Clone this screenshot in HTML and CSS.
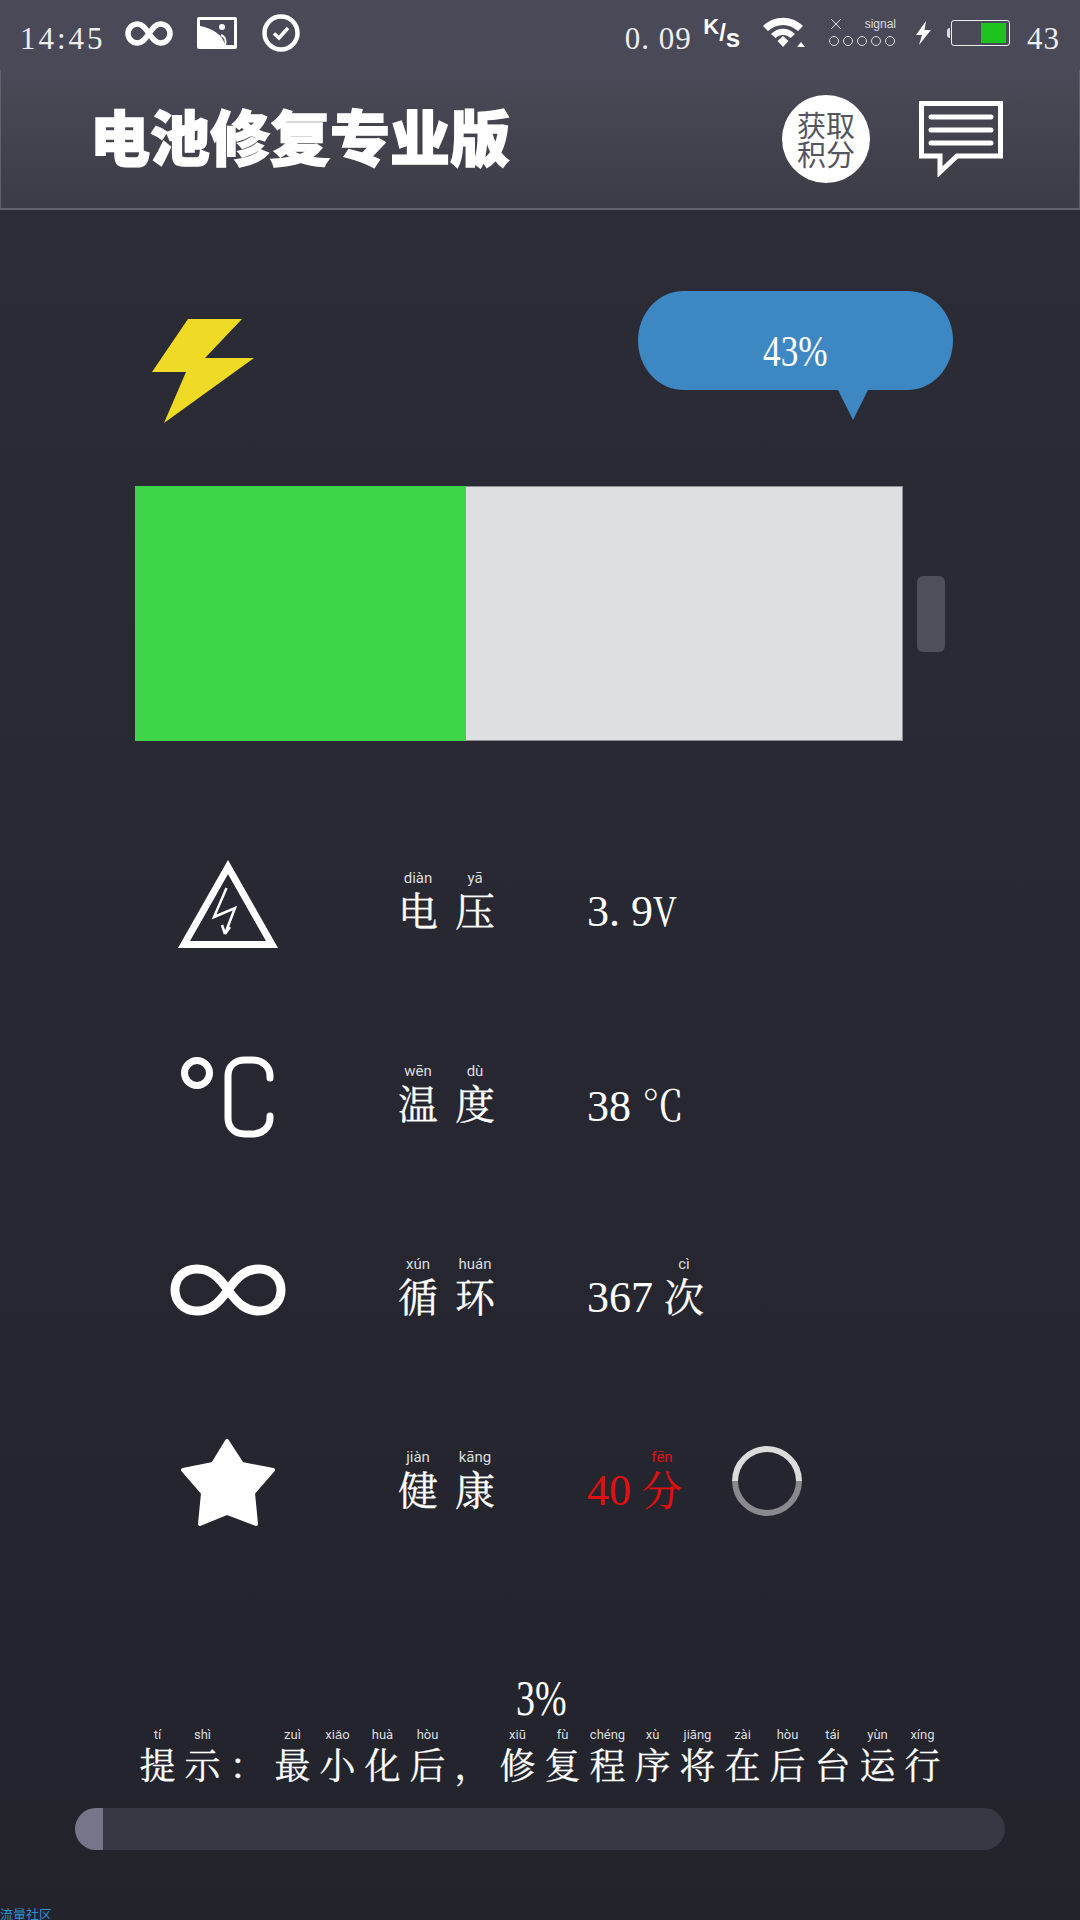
FILE: index.html
```html
<!DOCTYPE html>
<html lang="zh-CN">
<head>
  <meta charset="UTF-8" />
  <title>电池修复专业版</title>
  <meta name="viewport" content="width=device-width, initial-scale=1.0" />
  <link rel="stylesheet" href="styles.css">
</head>
<body>

  <!-- Status bar -->
  <div class="status-bar">
    <span class="status-time">14:45</span>
    <svg class="st-loop" viewBox="0 0 48 25"><path d="M24 12.500C20 6.500 17 3 12.500 3a9.500 9.500 0 0 0 0 19C17 22 20 18.500 24 12.500S31 3 35.500 3a9.500 9.500 0 0 1 0 19C31 22 28 18.500 24 12.500Z" fill="none" stroke="#fff" stroke-width="5.500"/></svg>
    <svg class="st-image" viewBox="0 0 40 32"><rect width="40" height="32" rx="2" fill="#fff"/><path d="M3 3H37V28H28C26 18 15 11 3 9Z" fill="#494957"/><circle cx="25" cy="10" r="3" fill="#fff"/><path d="M24 18C29 20 29 25 28 28" stroke="#fff" stroke-width="2" fill="none"/></svg>
    <svg class="st-check" viewBox="0 0 38 38"><circle cx="19" cy="19" r="16.500" fill="none" stroke="#fff" stroke-width="4.500"/><path d="M12 19.500L17 24L26 14" fill="none" stroke="#fff" stroke-width="3.500"/></svg>

    <span class="status-speed">0. 09</span>
    <span class="status-unit"><span class="unit-k">K</span>/<span class="unit-s">s</span></span>
    <svg class="st-wifi" viewBox="0 0 42 32"><path d="M0 10C11 -1 29 -1 40 10L35 15C26 7 14 7 5 15Z" fill="#fff"/><path d="M8 18C15 11 25 11 32 18L27.500 22C23 18 17 18 12.500 22Z" fill="#fff"/><path d="M14.500 25L20 20L25.500 25L20 31Z" fill="#fff"/><path d="M34 31L38 26L42 31Z" fill="#fff"/></svg>
    <div class="status-signal">
      <div class="signal-top">
        <svg class="st-cross" viewBox="0 0 12 12"><path d="M1 1L11 11M11 1L1 11" stroke="#ddd" stroke-width="1"/></svg>
        <span>signal</span>
      </div>
      <svg class="st-dots" viewBox="0 0 68 12">
        <circle cx="6" cy="6" r="4.500"/><circle cx="20" cy="6" r="4.500"/><circle cx="34" cy="6" r="4.500"/><circle cx="48" cy="6" r="4.500"/><circle cx="62" cy="6" r="4.500"/>
      </svg>
    </div>
    <svg class="st-bolt" viewBox="0 0 15 24"><path d="M10 0L0 14H6L3 24L15 9H8.500Z" fill="#fff"/></svg>
    <div class="st-battery">
      <div class="st-battery-nub"></div>
      <div class="st-battery-body"><div class="st-battery-fill"></div></div>
    </div>
    <span class="status-level">43</span>
  </div>

  <!-- Header -->
  <div class="header">
    <div class="header-title">电池修复专业版</div>
    <div class="points-btn">获取<br>积分</div>
    <svg class="chat-icon" viewBox="0 0 84 76">
      <path d="M2.500 2.500H81.500V55H38L21 71V55H2.500Z" fill="none" stroke="#fff" stroke-width="5"/>
      <path d="M12 16H72M12 29H72M12 42H72" stroke="#fff" stroke-width="5" stroke-linecap="round"/>
    </svg>
  </div>

  <div class="main">
    <div class="top-row">
      <svg class="bolt-icon" viewBox="0 0 102 104"><path d="M36 0H90L53 39H102L12 104L34 53H0Z" fill="#efda25"/></svg>
      <div class="bubble"><span class="narrow">43%</span></div>
    </div>

    <div class="battery-row">
      <div class="battery">
        <div class="battery-fill" style="width: 43.1%"></div>
      </div>
      <div class="battery-nub"></div>
    </div>

    <!-- Stats -->
    <div class="stats">
      <div class="stat">
        <div class="stat-icon">
          <svg width="102" height="90" viewBox="0 0 102 90">
            <path d="M51 8L95 85.500H7Z" fill="none" stroke="#fff" stroke-width="7"/>
            <path d="M49.500 29L37 58L58 49L48 75M48 75L45 66M48 75L53 68" fill="none" stroke="#fff" stroke-width="2.500"/>
          </svg>
        </div>
        <div class="stat-label">
          <span class="py"><rt>diàn</rt><b>电</b></span>
          <span class="py"><rt>yā</rt><b>压</b></span>
        </div>
        <div class="stat-value">3. 9<span class="volt">V</span></div>
      </div>

      <div class="stat">
        <div class="stat-icon">
          <svg width="94" height="84" viewBox="0 0 94 84">
            <circle cx="16" cy="18" r="12.500" fill="none" stroke="#fff" stroke-width="7"/>
            <path d="M89 23V21C89 11 81 5 71 5H64C54 5 47 11 47 21V63C47 73 54 79 64 79H71C81 79 89 73 89 63V61" fill="none" stroke="#fff" stroke-width="7" stroke-linecap="round"/>
          </svg>
        </div>
        <div class="stat-label">
          <span class="py"><rt>wēn</rt><b>温</b></span>
          <span class="py"><rt>dù</rt><b>度</b></span>
        </div>
        <div class="stat-value">38 <span class="cjk">℃</span></div>
      </div>

      <div class="stat">
        <div class="stat-icon">
          <svg width="116" height="52" viewBox="0 0 116 52">
            <path d="M58 26C48 12 40 5 27 5C14 5 5 14 5 26S14 47 27 47C40 47 48 40 58 26S76 5 89 5C102 5 111 14 111 26S102 47 89 47C76 47 68 40 58 26Z" fill="none" stroke="#fff" stroke-width="9"/>
          </svg>
        </div>
        <div class="stat-label">
          <span class="py"><rt>xún</rt><b>循</b></span>
          <span class="py"><rt>huán</rt><b>环</b></span>
        </div>
        <div class="stat-value">367 <span class="py"><rt>cì</rt><b>次</b></span></div>
      </div>

      <div class="stat">
        <div class="stat-icon">
          <svg width="96" height="92" viewBox="0 0 96 92">
            <path d="M47 4L62 27L93 33L73 56L76 87L47 76L20 87L23 56L3 33L33 27Z" fill="#fff" stroke="#fff" stroke-width="4" stroke-linejoin="round"/>
          </svg>
        </div>
        <div class="stat-label">
          <span class="py"><rt>jiàn</rt><b>健</b></span>
          <span class="py"><rt>kāng</rt><b>康</b></span>
        </div>
        <div class="stat-value stat-bad">40 <span class="py"><rt>fēn</rt><b>分</b></span></div>
        <div class="loader"></div>
      </div>
    </div>

    <!-- Repair progress -->
    <div class="progress-pct"><span class="narrow-more">3%</span></div>
    <div class="hint">
      <span class="py"><rt>tí</rt><b>提</b></span>
      <span class="py"><rt>shì</rt><b>示</b></span>
      <span class="py"><rt>&nbsp;</rt><b>：</b></span>
      <span class="py"><rt>zuì</rt><b>最</b></span>
      <span class="py"><rt>xiǎo</rt><b>小</b></span>
      <span class="py"><rt>huà</rt><b>化</b></span>
      <span class="py"><rt>hòu</rt><b>后</b></span>
      <span class="py"><rt>&nbsp;</rt><b>，</b></span>
      <span class="py"><rt>xiū</rt><b>修</b></span>
      <span class="py"><rt>fù</rt><b>复</b></span>
      <span class="py"><rt>chéng</rt><b>程</b></span>
      <span class="py"><rt>xù</rt><b>序</b></span>
      <span class="py"><rt>jiāng</rt><b>将</b></span>
      <span class="py"><rt>zài</rt><b>在</b></span>
      <span class="py"><rt>hòu</rt><b>后</b></span>
      <span class="py"><rt>tái</rt><b>台</b></span>
      <span class="py"><rt>yùn</rt><b>运</b></span>
      <span class="py"><rt>xíng</rt><b>行</b></span>
    </div>
    <div class="progress-bar">
      <div class="progress-fill" style="width: 3%"></div>
    </div>
  </div>

  <a class="footer-link">流量社区</a>
</body>
</html>
```

FILE: styles.css
```css
html, body {
  margin: 0;
  height: 1920px;
  overflow: hidden;
}

body {
  width: 1080px;
  background: linear-gradient(#2d2d38, #22232b);
  color: #fff;
  font-family: "Liberation Serif", "Noto Serif CJK SC", "Noto Sans CJK SC", serif;
}

/* Status bar */
.status-bar {
  display: flex;
  align-items: center;
  height: 70px;
  padding: 0 20px;
  box-sizing: border-box;
  background: #494957;
}

.status-bar svg {
  flex: none;
}

.status-time {
  font-size: 31px;
  letter-spacing: 3px;
  color: #eee;
  margin-top: 8px;
  width: 107px;
}

.st-loop {
  width: 48px;
  height: 25px;
  margin-top: -3px;
}

.st-image {
  width: 40px;
  height: 32px;
  margin-left: 24px;
  margin-top: -4px;
}

.st-check {
  width: 38px;
  height: 38px;
  margin-left: 25px;
  margin-top: -4px;
}

.status-speed {
  font-size: 31px;
  letter-spacing: 1px;
  color: #eee;
  margin-left: 325px;
  margin-top: 8px;
  width: 80px;
}

.status-unit {
  display: flex;
  align-items: center;
  width: 61px;
  height: 34px;
  font-family: "Liberation Sans", sans-serif;
  font-weight: bold;
  font-size: 24px;
  margin-top: -4px;
}

.unit-k {
  align-self: flex-start;
  font-size: 22px;
  line-height: 22px;
}

.unit-s {
  align-self: flex-end;
  line-height: 24px;
  font-size: 26px;
}

.st-wifi {
  width: 42px;
  height: 32px;
  margin-top: -6px;
}

.status-signal {
  width: 68px;
  margin-left: 23px;
  margin-top: -6px;
}

.signal-top {
  display: flex;
  justify-content: space-between;
  align-items: center;
  height: 14px;
  font-family: "Liberation Sans", sans-serif;
  font-size: 12px;
  color: #ddd;
}

.st-cross {
  width: 12px;
  height: 12px;
  margin-left: 2px;
}

.st-dots {
  display: block;
  width: 68px;
  height: 12px;
  margin-top: 4px;
}

.st-dots circle {
  fill: none;
  stroke: #ddd;
  stroke-width: 1;
}

.st-bolt {
  width: 15px;
  height: 24px;
  margin-left: 20px;
  margin-top: -4px;
}

.st-battery {
  display: flex;
  align-items: center;
  margin-left: 16px;
  margin-top: -4px;
}

.st-battery-nub {
  width: 3px;
  height: 10px;
  background: #ddd;
  border-radius: 3px 0 0 3px;
  margin-right: 1px;
}

.st-battery-body {
  display: flex;
  justify-content: flex-end;
  width: 54px;
  height: 20px;
  padding: 2px 3px 2px 0;
  border: 1px solid #eee;
  border-radius: 3px;
}

.st-battery-fill {
  width: 25px;
  background: #1fc31f;
}

.status-level {
  font-size: 31px;
  letter-spacing: 1px;
  color: #eee;
  margin-left: 17px;
  margin-top: 8px;
}

/* Header */
.header {
  display: flex;
  align-items: center;
  height: 140px;
  padding: 0 76px 0 89px;
  box-sizing: border-box;
  background: linear-gradient(#4a4a58, #3c3c46);
  border: 1px solid #60606b;
  border-top: none;
  border-bottom-width: 2px;
}

.header-title {
  flex: 1;
  font-family: "Noto Sans CJK SC", sans-serif;
  font-size: 60px;
  line-height: 60px;
  font-weight: 900;
  -webkit-text-stroke: 1.500px #fff;
  color: #fff;
  margin-bottom: 8px;
}

.points-btn {
  width: 88px;
  height: 88px;
  border-radius: 50%;
  background: #fff;
  color: #55555f;
  font-family: "Noto Sans CJK SC", sans-serif;
  font-size: 29px;
  line-height: 29px;
  text-align: center;
  display: flex;
  align-items: center;
  justify-content: center;
}

.chat-icon {
  width: 84px;
  height: 76px;
  margin-left: 49px;
}

/* Battery */
.top-row {
  display: flex;
  justify-content: space-between;
  align-items: center;
  height: 129px;
  margin: 81px 127px 0 152px;
}

.bolt-icon {
  width: 102px;
  height: 104px;
  margin-top: 31px;
}

.bubble {
  position: relative;
  width: 315px;
  height: 99px;
  padding-top: 36px;
  box-sizing: border-box;
  border-radius: 46px / 50px;
  background: #3d88c3;
  font-size: 44px;
  line-height: 50px;
  text-align: center;
  margin-top: -30px;
}

.narrow {
  display: inline-block;
  transform: scaleX(0.8);
}

.narrow-more {
  display: inline-block;
  transform: scaleX(0.76);
}

.volt {
  display: inline-block;
  transform: scaleX(0.75);
  transform-origin: left;
}

.bubble::after {
  content: "";
  position: absolute;
  top: 99px;
  left: 200px;
  border-top: 30px solid #3d88c3;
  border-left: 15px solid transparent;
  border-right: 15px solid transparent;
}

.battery-row {
  display: flex;
  align-items: center;
  gap: 14px;
  margin: 66px 0 0 135px;
}

.battery {
  width: 768px;
  height: 255px;
  box-sizing: border-box;
  background: #dedfe1;
  border: 1px solid #8e8e96;
  border-left: none;
}

.battery-fill {
  height: 255px;
  margin-top: -1px;
  background: #3fd548;
}

.battery-nub {
  width: 28px;
  height: 76px;
  border-radius: 6px;
  background: #4f4f5c;
}

/* Stats */
.stats {
  margin: 66px 0 0 160px;
}

.stat {
  display: flex;
  align-items: center;
  height: 193px;
}

.stat-icon {
  display: flex;
  justify-content: center;
  flex: none;
  width: 136px;
  margin-right: 102px;
}

.stat-label {
  display: flex;
  gap: 17px;
  flex: none;
  width: 189px;
  margin-top: -5px;
}

.py {
  display: inline-flex;
  flex-direction: column;
  align-items: center;
  vertical-align: bottom;
}

.py rt {
  display: block;
  font-family: Roboto, sans-serif;
  font-size: 15px;
  line-height: 16px;
  color: #ddd;
}

.py b {
  font-family: "Noto Serif CJK SC", "Noto Sans CJK SC", serif;
  font-weight: 400;
  font-size: 40px;
  line-height: 46px;
  -webkit-text-stroke: 0.3px currentColor;
}

.cjk {
  font-family: "Noto Serif CJK SC", "Noto Sans CJK SC", serif;
  font-size: 42px;
}

.stat-value {
  flex: none;
  width: 145px;
  font-size: 44px;
  line-height: 46px;
  margin-top: 16px;
}

.stat-value .py {
  margin-top: -16px;
  transform: translateY(-3px);
}

.stat-bad {
  color: #e11010;
}

.stat-bad .py rt {
  color: #e11010;
}

.loader {
  width: 70px;
  height: 70px;
  box-sizing: border-box;
  margin-top: -4px;
  border-radius: 50%;
  border: 6px solid;
  border-color: #dcdcdc #dcdcdc #8a8a8e #8a8a8e;
  transform: rotate(-45deg);
}

/* Progress */
.progress-pct {
  margin-top: 94px;
  padding-left: 2px;
  font-size: 50px;
  line-height: 50px;
  text-align: center;
}

.hint {
  display: flex;
  justify-content: center;
  gap: 9px;
  margin-top: 5px;
}

.hint .py {
  width: 36px;
}

.hint .py rt {
  font-size: 13px;
  line-height: 14px;
}

.hint .py b {
  font-size: 36px;
  line-height: 44px;
}

.progress-bar {
  width: 930px;
  height: 42px;
  margin: 22px 0 0 75px;
  border-radius: 21px;
  overflow: hidden;
  background: #373844;
}

.progress-fill {
  height: 100%;
  background: #76768a;
}

.footer-link {
  display: block;
  margin-top: 54px;
  font-family: "Noto Sans CJK SC", sans-serif;
  font-size: 13px;
  line-height: 20px;
  color: #2f8fd0;
}
```
